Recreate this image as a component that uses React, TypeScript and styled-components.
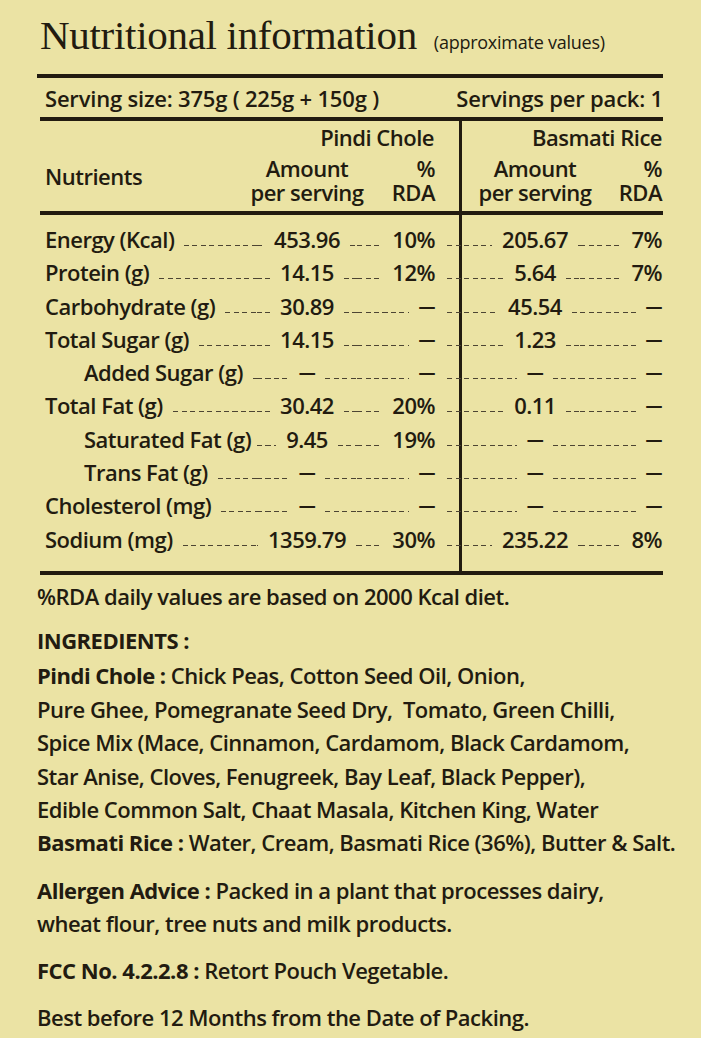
import React from 'react';
import styled, { createGlobalStyle } from 'styled-components';

const ink = '#221b10';
const paper = '#ebe3a4';

const Global = createGlobalStyle`
  html, body { margin: 0; padding: 0; background: ${paper}; }
  body {
    font-family: "Open Sans", "Noto Sans", sans-serif;
    color: ${ink};
    -webkit-font-smoothing: antialiased;
  }
`;

const Page = styled.div`
  width: 701px;
  height: 1038px;
  box-sizing: border-box;
  padding: 0 38px 0 37px;
  overflow: hidden;
  background: ${paper};
  font-size: 22px;
  font-weight: 600;
  letter-spacing: -0.5px;
`;

const TitleRow = styled.div`
  display: flex;
  align-items: baseline;
  gap: 17px;
  padding: 16px 0 0 3px;
  height: 56px;
  box-sizing: border-box;
  margin-bottom: 18px;
  white-space: nowrap;
`;

const Title = styled.h1`
  margin: 0;
  font-family: "Liberation Serif", serif;
  font-weight: 400;
  font-size: 41px;
  line-height: 38px;
  letter-spacing: -0.3px;
`;

const Subtitle = styled.span`
  font-size: 18px;
  font-weight: 500;
  letter-spacing: -0.25px;
`;

const Table = styled.section`
  border-top: 4px solid ${ink};
`;

const ServingRow = styled.div`
  margin-left: 3px;
  height: 39px;
  display: flex;
  align-items: center;
  justify-content: space-between;
  padding-left: 5px;
  border-bottom: 4px solid ${ink};
  white-space: nowrap;
  letter-spacing: -0.2px;
`;

const cols = '217px 100px 80px 53px 90px 83px';

const Grid = styled.div`
  margin-left: 3px;
  border-bottom: 4px solid ${ink};
  background: linear-gradient(${ink}, ${ink}) no-repeat 419px 0 / 3px 100%;
`;

const Header = styled.div`
  display: grid;
  grid-template-columns: ${cols};
  grid-template-rows: 31px 24px 24px;
  padding: 4px 0 7px;
  border-bottom: 4px solid ${ink};
  line-height: 24px;
  white-space: nowrap;
`;

const Product = styled.div<{ $side: 'left' | 'right' }>`
  grid-row: 1;
  grid-column: ${(p) => (p.$side === 'left' ? '1 / 4' : '4 / 7')};
  justify-self: end;
  padding-right: ${(p) => (p.$side === 'left' ? '3px' : '1px')};
`;

const NutrientsHead = styled.div`
  grid-column: 1;
  grid-row: 2 / 4;
  align-self: center;
  padding-left: 5px;
  margin-bottom: 8px;
`;

const AmountHead = styled.div<{ $col: number }>`
  grid-column: ${(p) => p.$col};
  grid-row: 2 / 4;
  display: flex;
  flex-direction: column;
  align-items: center;
`;

const RdaHead = styled.div<{ $col: number; $pad: number }>`
  grid-column: ${(p) => p.$col};
  grid-row: 2 / 4;
  display: flex;
  flex-direction: column;
  align-items: flex-end;
  padding-right: ${(p) => p.$pad}px;
`;

const Body = styled.div`
  padding: 8px 0 15px;
`;

const Row = styled.div`
  display: grid;
  grid-template-columns: ${cols};
  align-items: baseline;
  height: 33.3px;
  line-height: 33.3px;
`;

const Cell = styled.div`
  display: flex;
  align-items: baseline;
  min-width: 0;
  white-space: nowrap;
`;

const LabelCell = styled(Cell)<{ $indent: boolean }>`
  padding-left: ${(p) => (p.$indent ? 44 : 5)}px;
`;

const GapCell = styled(Cell)`
  padding-left: 10px;
`;

const RdaCell = styled(Cell)<{ $pad: number }>`
  padding-right: ${(p) => p.$pad}px;
`;

const Label = styled.span`
  margin-right: 10px;
`;

const Value = styled.span`
  padding: 0 10px;
`;

const Rda = styled.span`
  margin-left: 10px;
`;

const Dash = styled.span`
  font-size: 17px;
  font-weight: 700;
  line-height: 1;
  position: relative;
  top: -2px;
`;

const Leader = styled.span`
  flex: 1 1 0;
  min-width: 0;
  height: 1px;
  transform: translateY(-2px);
  background-image: repeating-linear-gradient(
    to right,
    #4d4533 0 5px,
    transparent 5px 8.5px
  );
`;

const Notes = styled.div`
  padding-top: 5px;
  line-height: 33.4px;
  white-space: nowrap;
`;

const Para = styled.p<{ $gap?: number }>`
  margin: ${(p) => p.$gap ?? 0}px 0 0;
`;

const Heading = styled.div`
  font-weight: 700;
  margin-top: 11px;
  margin-bottom: 1.5px;
`;

const B = styled.b`
  font-weight: 700;
`;

type Nutrient = {
  name: string;
  indent?: boolean;
  a1: string;
  r1: string;
  a2: string;
  r2: string;
};

const D = '—';

const rows: Nutrient[] = [
  { name: 'Energy (Kcal)', a1: '453.96', r1: '10%', a2: '205.67', r2: '7%' },
  { name: 'Protein (g)', a1: '14.15', r1: '12%', a2: '5.64', r2: '7%' },
  { name: 'Carbohydrate (g)', a1: '30.89', r1: D, a2: '45.54', r2: D },
  { name: 'Total Sugar (g)', a1: '14.15', r1: D, a2: '1.23', r2: D },
  { name: 'Added Sugar (g)', indent: true, a1: D, r1: D, a2: D, r2: D },
  { name: 'Total Fat (g)', a1: '30.42', r1: '20%', a2: '0.11', r2: D },
  { name: 'Saturated Fat (g)', indent: true, a1: '9.45', r1: '19%', a2: D, r2: D },
  { name: 'Trans Fat (g)', indent: true, a1: D, r1: D, a2: D, r2: D },
  { name: 'Cholesterol (mg)', a1: D, r1: D, a2: D, r2: D },
  { name: 'Sodium (mg)', a1: '1359.79', r1: '30%', a2: '235.22', r2: '8%' },
];

const Val: React.FC<{ v: string }> = ({ v }) => (v === D ? <Dash>{v}</Dash> : <>{v}</>);

const NutrientRow: React.FC<{ n: Nutrient }> = ({ n }) => (
  <Row>
    <LabelCell $indent={!!n.indent}>
      <Label>{n.name}</Label>
      <Leader />
    </LabelCell>
    <Cell>
      <Leader />
      <Value>
        <Val v={n.a1} />
      </Value>
      <Leader />
    </Cell>
    <RdaCell $pad={2}>
      <Leader />
      <Rda>
        <Val v={n.r1} />
      </Rda>
    </RdaCell>
    <GapCell>
      <Leader />
    </GapCell>
    <Cell>
      <Leader />
      <Value>
        <Val v={n.a2} />
      </Value>
      <Leader />
    </Cell>
    <RdaCell $pad={1}>
      <Leader />
      <Rda>
        <Val v={n.r2} />
      </Rda>
    </RdaCell>
  </Row>
);

export default function App() {
  return (
    <Page>
      <Global />
      <TitleRow>
        <Title>Nutritional information</Title>
        <Subtitle>(approximate values)</Subtitle>
      </TitleRow>
      <Table>
        <ServingRow>
          <span>Serving size: 375g ( 225g + 150g )</span>
          <span>Servings per pack: 1</span>
        </ServingRow>
        <Grid>
          <Header>
            <Product $side="left">Pindi Chole</Product>
            <Product $side="right">Basmati Rice</Product>
            <NutrientsHead>Nutrients</NutrientsHead>
            <AmountHead $col={2}>
              <span>Amount</span>
              <span>per serving</span>
            </AmountHead>
            <RdaHead $col={3} $pad={2}>
              <span>%</span>
              <span>RDA</span>
            </RdaHead>
            <AmountHead $col={5}>
              <span>Amount</span>
              <span>per serving</span>
            </AmountHead>
            <RdaHead $col={6} $pad={1}>
              <span>%</span>
              <span>RDA</span>
            </RdaHead>
          </Header>
          <Body>
            {rows.map((n) => (
              <NutrientRow key={n.name} n={n} />
            ))}
          </Body>
        </Grid>
      </Table>
      <Notes>
        <Para>%RDA daily values are based on 2000 Kcal diet.</Para>
        <Heading>INGREDIENTS :</Heading>
        <Para>
          <B>Pindi Chole :</B> Chick Peas, Cotton Seed Oil, Onion,
          <br />
          Pure Ghee, Pomegranate Seed Dry,&nbsp; Tomato, Green Chilli,
          <br />
          Spice Mix (Mace, Cinnamon, Cardamom, Black Cardamom,
          <br />
          Star Anise, Cloves, Fenugreek, Bay Leaf, Black Pepper),
          <br />
          Edible Common Salt, Chaat Masala, Kitchen King, Water
          <br />
          <B>Basmati Rice :</B> Water, Cream, Basmati Rice (36%), Butter &amp; Salt.
        </Para>
        <Para $gap={14}>
          <B>Allergen Advice :</B> Packed in a plant that processes dairy,
          <br />
          wheat flour, tree nuts and milk products.
        </Para>
        <Para $gap={13}>
          <B>FCC No. 4.2.2.8 :</B> Retort Pouch Vegetable.
        </Para>
        <Para $gap={14}>Best before 12 Months from the Date of Packing.</Para>
      </Notes>
    </Page>
  );
}
